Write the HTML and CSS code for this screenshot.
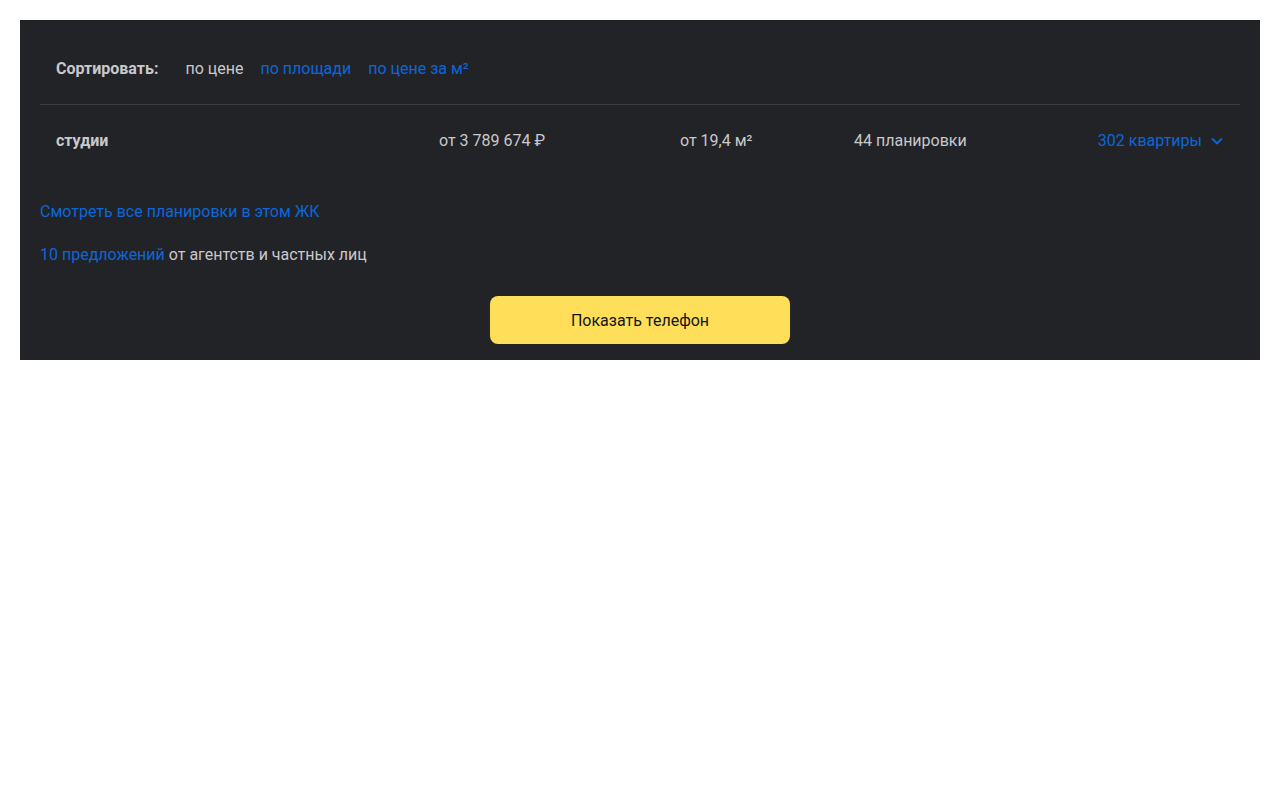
FILE: index.html
```html
<!DOCTYPE html>
<html lang="ru">
<head>
<meta charset="utf-8">
<link rel="stylesheet" href="styles.css">
</head>
<body>
<div class="panel">
  <div class="sort">
    <span class="sort-label">Сортировать:</span>
    <span class="sort-item active">по цене</span>
    <a class="sort-item link">по площади</a>
    <a class="sort-item link">по цене за м²</a>
  </div>
  <div class="row">
    <span class="name">студии</span>
    <span>от 3 789 674 ₽</span>
    <span>от 19,4 м²</span>
    <span>44 планировки</span>
    <a class="flats link">302 квартиры
      <svg class="chev" width="14" height="14" viewBox="0 0 14 14"><path d="M2 4.5 L7 9.5 L12 4.5" fill="none" stroke="currentColor" stroke-width="1.8"/></svg>
    </a>
  </div>
  <div class="all"><a class="link">Смотреть все планировки в этом ЖК</a></div>
  <div class="offers"><a class="link">10 предложений</a> от агентств и частных лиц</div>
  <div class="actions"><button class="phone">Показать телефон</button></div>
</div>
</body>
</html>
```
FILE: styles.css
```css
html, body { margin: 0; padding: 0; background: #fff; }
body { padding: 20px; font-family: Roboto, "Noto Sans", sans-serif; font-size: 16px; color: #c9c9cb; }
.panel { background: #222327; padding: 0 20px 16px; }
.link { color: #0b67db; text-decoration: none; }
.sort { display: flex; align-items: center; line-height: 24px; padding: 37px 16px 23px; border-bottom: 1px solid #3b3c40; }
.sort-label { font-weight: 700; margin-right: 27px; }
.sort-item { margin-right: 17px; }
.row { display: grid; grid-template-columns: 383px 241px 174px 1fr auto; align-items: center; height: 71px; padding: 0 16px; }
.name { font-weight: 700; }
.flats { display: flex; align-items: center; gap: 8px; }
.chev { display: block; }
.all { margin-top: 24px; height: 24px; line-height: 24px; }
.offers { margin-top: 19px; height: 24px; line-height: 24px; }
.actions { display: flex; justify-content: center; margin-top: 29px; }
.phone { width: 300px; height: 48px; border: none; border-radius: 8px; background: #ffdf5a; color: #141414; font-family: inherit; font-size: 16px; }
```
